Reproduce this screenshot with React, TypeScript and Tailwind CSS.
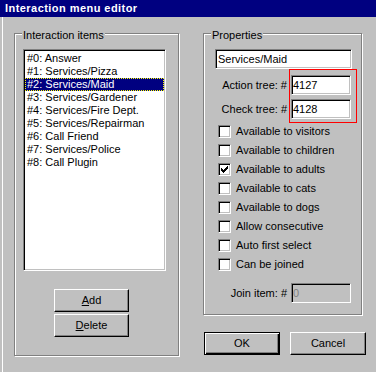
import React from "react";

const ITEMS = [
  "#0: Answer",
  "#1: Services/Pizza",
  "#2: Services/Maid",
  "#3: Services/Gardener",
  "#4: Services/Fire Dept.",
  "#5: Services/Repairman",
  "#6: Call Friend",
  "#7: Services/Police",
  "#8: Call Plugin",
];

const OPTIONS = [
  { label: "Available to visitors", checked: false },
  { label: "Available to children", checked: false },
  { label: "Available to adults", checked: true },
  { label: "Available to cats", checked: false },
  { label: "Available to dogs", checked: false },
  { label: "Allow consecutive", checked: false },
  { label: "Auto first select", checked: false },
  { label: "Can be joined", checked: false },
];

// classic 3d edges
const sunken =
  "border border-t-[#808080] border-l-[#808080] border-r-white border-b-white shadow-[inset_1px_1px_0_#000,inset_-1px_-1px_0_#c0c0c0]";
const raised =
  "border border-t-white border-l-white border-r-black border-b-black shadow-[inset_-1px_-1px_0_#808080]";
const raisedDefault =
  "border border-black shadow-[inset_1px_1px_0_#fff,inset_-1px_-1px_0_#000,inset_-2px_-2px_0_#808080]";

function GroupBox({ title, className, children }: { title: string; className: string; children: React.ReactNode }) {
  return (
    <div className={`relative border border-[#808080] shadow-[inset_1px_1px_0_#fff,1px_1px_0_#fff] ${className}`}>
      <span className="absolute -top-[5px] left-[7px] bg-[#c0c0c0] px-[1px] leading-[13px] whitespace-nowrap">
        {title}
      </span>
      {children}
    </div>
  );
}

function CheckBox({ checked }: { checked: boolean }) {
  return (
    <span className={`w-[13px] h-[13px] shrink-0 bg-white flex items-center justify-center ${sunken}`}>
      {checked && (
        <svg width="7" height="7" viewBox="0 0 7 7" shapeRendering="crispEdges">
          <rect x="6" y="0" width="1" height="1" fill="#000" />
          <rect x="5" y="1" width="2" height="1" fill="#000" />
          <rect x="0" y="2" width="1" height="1" fill="#000" />
          <rect x="4" y="2" width="3" height="1" fill="#000" />
          <rect x="0" y="3" width="2" height="1" fill="#000" />
          <rect x="3" y="3" width="3" height="1" fill="#000" />
          <rect x="0" y="4" width="5" height="1" fill="#000" />
          <rect x="1" y="5" width="3" height="1" fill="#000" />
          <rect x="2" y="6" width="1" height="1" fill="#000" />
        </svg>
      )}
    </span>
  );
}

function Button({ children, isDefault, className = "" }: { children: React.ReactNode; isDefault?: boolean; className?: string }) {
  return (
    <button
      type="button"
      className={`h-[23px] flex items-center justify-center bg-[#c0c0c0] leading-[13px] ${isDefault ? raisedDefault : raised} ${className}`}
    >
      {children}
    </button>
  );
}

function NumberField({ label, value, disabled }: { label: string; value: string; disabled?: boolean }) {
  return (
    <div className="flex items-center justify-end gap-[4px] pr-[10px]">
      <span className="whitespace-nowrap">{label}</span>
      <div
        className={`w-[60px] h-[20px] flex items-center pl-[1px] ${sunken} ${disabled ? "bg-[#c0c0c0] text-[#808080]" : "bg-white"}`}
      >
        {value}
      </div>
    </div>
  );
}

export default function App() {
  return (
    <div className="relative w-[376px] h-[372px] overflow-hidden bg-[#c0c0c0] font-['Liberation_Sans',Arial,sans-serif] text-[11px] text-black">
      <div className="h-[17px] bg-[#000080] pl-[5px] pt-[1px] text-white font-bold text-[11px] leading-[15px] tracking-[0.45px]">
        Interaction menu editor
      </div>

      <div className="flex h-[355px] pl-[14px] pt-[16px] shadow-[inset_2px_0_0_#c0c0c0,inset_3px_0_0_#fff]">
        <GroupBox title="Interaction items" className="w-[165px] h-[323px]">
          <div className={`ml-[8px] mt-[15px] w-[143px] h-[222px] bg-white pt-[2px] px-[1px] ${sunken}`}>
            {ITEMS.map((item, i) => (
              <div
                key={item}
                className={`h-[13px] leading-[13px] pl-[2px] whitespace-nowrap ${
                  i === 2 ? "bg-[#000080] text-white outline outline-1 outline-dotted outline-[#ffff00] -outline-offset-1" : ""
                }`}
              >
                {item}
              </div>
            ))}
          </div>
          <div className="ml-[39px] mt-[18px] flex flex-col gap-[2px]">
            <Button className="w-[75px]">
              <u>A</u>dd
            </Button>
            <Button className="w-[75px]">
              <u>D</u>elete
            </Button>
          </div>
        </GroupBox>

        <div className="ml-[24px] flex flex-col">
          <GroupBox title="Properties" className="w-[159px] h-[282px] flex flex-col">
            <div className={`ml-[11px] mt-[15px] w-[137px] h-[20px] bg-white flex items-center pl-[2px] ${sunken}`}>
              Services/Maid
            </div>
            <div className="mt-[6px]">
              <NumberField label="Action tree: #" value="4127" />
            </div>
            <div className="mt-[4px]">
              <NumberField label="Check tree: #" value="4128" />
            </div>
            <div className="mt-[3px] flex flex-col">
              {OPTIONS.map((o) => (
                <div key={o.label} className="h-[19px] flex items-center gap-[5px] pl-[14px]">
                  <CheckBox checked={o.checked} />
                  <span className="whitespace-nowrap leading-[13px]">{o.label}</span>
                </div>
              ))}
            </div>
            <div className="mt-[9px]">
              <NumberField label="Join item: #" value="0" disabled />
            </div>
          </GroupBox>

          <div className="flex gap-[10px] mt-[17px] ml-[1px]">
            <Button isDefault className="w-[76px]">
              OK
            </Button>
            <Button className="w-[76px]">Cancel</Button>
          </div>
        </div>
      </div>

      {/* highlight around the tree numbers */}
      <div className="absolute left-[289px] top-[69px] w-[68px] h-[54px] border border-[#ff0000]" />
    </div>
  );
}
